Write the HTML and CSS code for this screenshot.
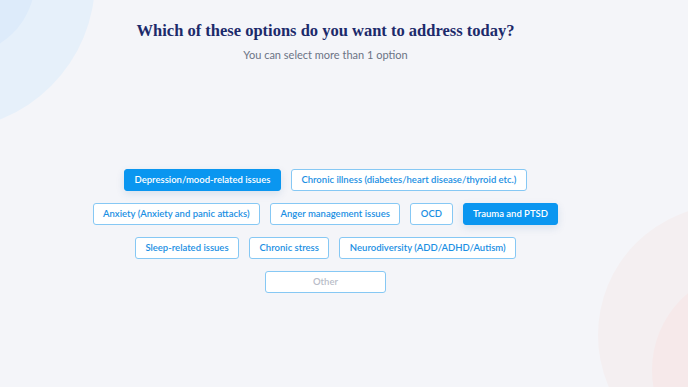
FILE: index.html
```html
<!DOCTYPE html>
<html>
<head>
<meta charset="utf-8">
<link rel="stylesheet" href="styles.css">
</head>
<body>
<div class="bg">
  <div class="blob blob-tl-outer"></div>
  <div class="blob blob-tl-inner"></div>
  <div class="blob blob-br-outer"></div>
  <div class="blob blob-br-inner"></div>
</div>
<main class="page">
  <h1 class="title">Which of these options do you want to address today?</h1>
  <p class="subtitle">You can select more than 1 option</p>
  <div class="options">
    <div class="row">
      <button class="opt selected">Depression/mood-related issues</button>
      <button class="opt">Chronic illness (diabetes/heart disease/thyroid etc.)</button>
    </div>
    <div class="row">
      <button class="opt">Anxiety (Anxiety and panic attacks)</button>
      <button class="opt">Anger management issues</button>
      <button class="opt">OCD</button>
      <button class="opt selected">Trauma and PTSD</button>
    </div>
    <div class="row">
      <button class="opt">Sleep-related issues</button>
      <button class="opt">Chronic stress</button>
      <button class="opt">Neurodiversity (ADD/ADHD/Autism)</button>
    </div>
    <div class="row">
      <button class="opt other">Other</button>
    </div>
  </div>
</main>
</body>
</html>
```

FILE: styles.css
```css
html, body {
  margin: 0;
  padding: 0;
  overflow: hidden;
}
body {
  width: 688px;
  height: 387px;
  background: #f4f5f9;
  font-family: Lato, "Noto Sans", sans-serif;
  position: relative;
}
.bg {
  position: absolute;
  inset: 0;
  overflow: hidden;
}
.blob {
  position: absolute;
  border-radius: 50%;
}
.blob-tl-outer {
  width: 300px;
  height: 300px;
  left: -205px;
  top: -170px;
  background: #e6f0fa;
}
.blob-tl-inner {
  width: 150px;
  height: 150px;
  left: -115px;
  top: -95px;
  background: #ddebfa;
}
.blob-br-outer {
  width: 260px;
  height: 260px;
  left: 598px;
  top: 205px;
  background: #f4eff1;
}
.blob-br-inner {
  width: 200px;
  height: 200px;
  left: 652px;
  top: 270px;
  background: #f6e9ea;
}
.page {
  position: relative;
  width: 651px;
  display: flex;
  flex-direction: column;
  align-items: center;
  padding-top: 19px;
}
.title {
  margin: 0;
  font-family: "Liberation Serif", serif;
  font-weight: bold;
  font-size: 16.5px;
  color: #1c2a6b;
  line-height: 24px;
}
.subtitle {
  margin: 5px 0 0;
  font-size: 11px;
  color: #6b7385;
  line-height: 14px;
}
.options {
  margin-top: 107px;
  display: flex;
  flex-direction: column;
  align-items: center;
  gap: 12px;
}
.row {
  display: flex;
  gap: 10px;
  justify-content: center;
}
.opt {
  height: 22px;
  padding: 0 9.5px;
  border: 1px solid #86c8f4;
  border-radius: 3px;
  background: #ffffff;
  color: #1b8fe3;
  font-family: Lato, sans-serif;
  font-size: 9.5px;
  font-weight: 600;
  line-height: 20px;
  cursor: pointer;
}
.opt.selected {
  background: #0a96f0;
  border-color: #0a96f0;
  color: #ffffff;
  box-shadow: 0 3px 8px rgba(10, 80, 150, 0.12);
}
.opt.other {
  width: 121px;
  color: #b9bdc8;
}
```
